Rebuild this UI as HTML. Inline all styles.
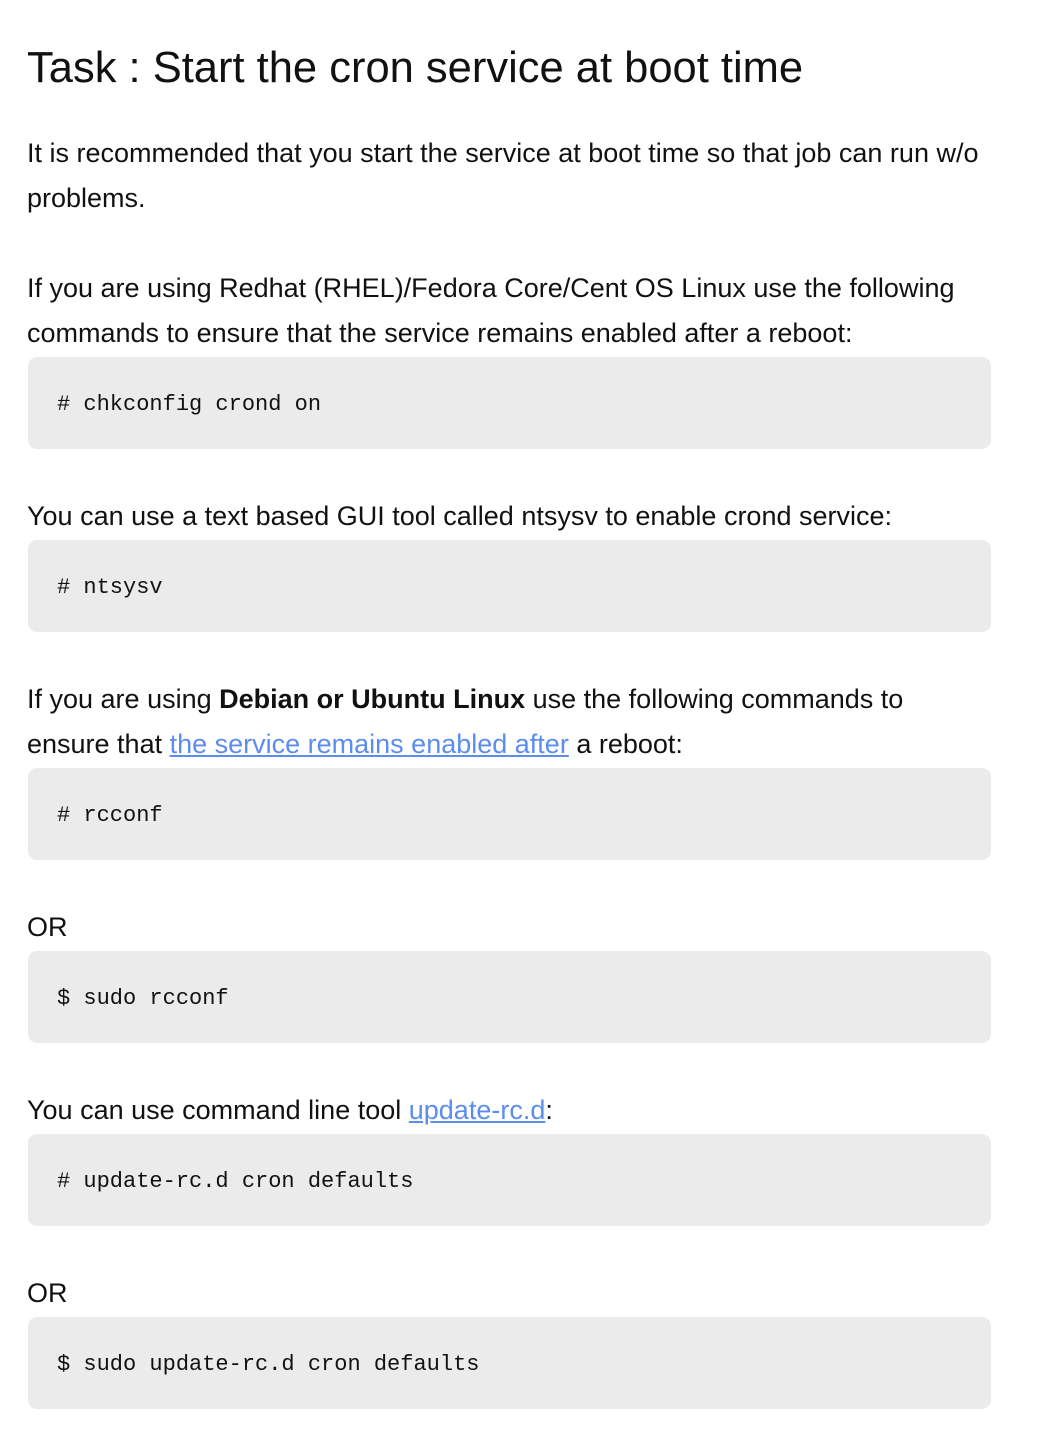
<!DOCTYPE html>
<html><head><meta charset="utf-8"><style>
body{margin:0;width:1045px;height:1439px;background:#fff;position:relative;font-family:"Liberation Sans",Arial,sans-serif;color:#111;overflow:hidden}
.t{position:absolute;left:27px;font-size:27px;line-height:45px;white-space:nowrap}
h1{position:absolute;left:27px;top:40px;margin:0;font-weight:normal;font-size:43.5px;line-height:56px;white-space:nowrap}
.c{position:absolute;left:28px;width:963px;height:92px;background:#ebebeb;border-radius:9px}
.c span{position:absolute;left:29px;top:35px;font-family:"Liberation Mono",monospace;font-size:22px;line-height:26px;white-space:pre;color:#111}
a{color:#5b8def;text-decoration:underline}
</style></head><body>
<h1>Task : Start the cron service at boot time</h1>
<div class="t" style="top:131px">It is recommended that you start the service at boot time so that job can run w/o</div>
<div class="t" style="top:176px">problems.</div>
<div class="t" style="top:266px">If you are using Redhat (RHEL)/Fedora Core/Cent OS Linux use the following</div>
<div class="t" style="top:311px">commands to ensure that the service remains enabled after a reboot:</div>
<div class="c" style="top:357px"><span># chkconfig crond on</span></div>
<div class="t" style="top:494px">You can use a text based GUI tool called ntsysv to enable crond service:</div>
<div class="c" style="top:540px"><span># ntsysv</span></div>
<div class="t" style="top:677px">If you are using <b>Debian or Ubuntu Linux</b> use the following commands to</div>
<div class="t" style="top:722px">ensure that <a>the service remains enabled after</a> a reboot:</div>
<div class="c" style="top:768px"><span># rcconf</span></div>
<div class="t" style="top:905px">OR</div>
<div class="c" style="top:951px"><span>$ sudo rcconf</span></div>
<div class="t" style="top:1088px">You can use command line tool <a>update-rc.d</a>:</div>
<div class="c" style="top:1134px"><span># update-rc.d cron defaults</span></div>
<div class="t" style="top:1271px">OR</div>
<div class="c" style="top:1317px"><span>$ sudo update-rc.d cron defaults</span></div>
</body></html>
